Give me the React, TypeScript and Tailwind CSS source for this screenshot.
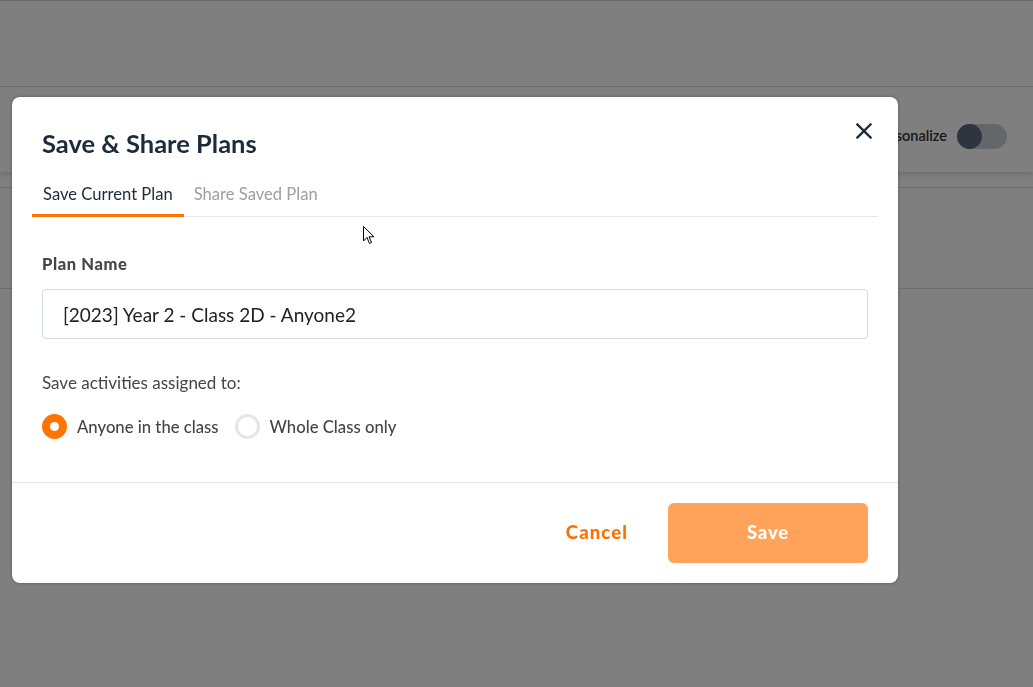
import { useState } from "react";

const FONT = "font-['Lato','Noto_Sans',sans-serif]";

function CloseIcon() {
  return (
    <svg width="16" height="16" viewBox="0 0 16 16" fill="none" stroke="#1c2b39" strokeWidth="2.3" strokeLinecap="square">
      <line x1="1.5" y1="1.5" x2="14.5" y2="14.5" />
      <line x1="14.5" y1="1.5" x2="1.5" y2="14.5" />
    </svg>
  );
}

function Radio({ checked, label, onClick }: { checked: boolean; label: string; onClick: () => void }) {
  return (
    <button onClick={onClick} className="flex items-center gap-[10px]">
      {checked ? (
        <span className="w-[25px] h-[25px] rounded-full bg-[#ff7300] flex items-center justify-center">
          <span className="w-[9px] h-[9px] rounded-full bg-white" />
        </span>
      ) : (
        <span className="w-[25px] h-[25px] rounded-full border-[3px] border-[#e6e6e6] bg-white" />
      )}
      <span className="text-[16.7px] leading-[20px] font-medium text-[#454545]">{label}</span>
    </button>
  );
}

export default function App() {
  const [tab, setTab] = useState<"save" | "share">("save");
  const [assign, setAssign] = useState<"anyone" | "whole">("anyone");
  const [name, setName] = useState("[2023] Year 2 - Class 2D - Anyone2");

  return (
    <div className={`relative min-h-screen bg-white overflow-hidden ${FONT}`}>
      {/* Page behind the dialog */}
      <div className="h-[87px] border-t border-b border-[#d6d6d6]" />
      <div className="mt-[13px] h-[72px] bg-white shadow-[0_3px_5px_rgba(0,0,0,0.12)] flex items-center justify-end pr-[26px] gap-[10px]">
        <span className="text-[14.5px] font-semibold text-[#333333]">Personalize</span>
        <span className="w-[50px] h-[25px] rounded-full bg-[#c8ced2] flex items-center">
          <span className="w-[25px] h-[25px] rounded-full bg-[#5c6a80]" />
        </span>
      </div>
      <div className="mt-[15px] h-[102px] border-t border-b border-[#dcdcdc]" />

      {/* Backdrop */}
      <div className="fixed inset-0 bg-black/50" />

      {/* Dialog */}
      <div className="absolute left-[12px] top-[97px] w-[886px] bg-white rounded-lg shadow-[0_0_3px_rgba(0,0,0,0.35)]">
        <div className="flex items-start justify-between pl-[30px] pr-[26px] pt-[32px]">
          <h2 className="text-[25.5px] leading-[28px] font-bold text-[#1c2b39]">Save &amp; Share Plans</h2>
          <button className="-mt-[6px]" aria-label="Close">
            <CloseIcon />
          </button>
        </div>

        <div className="mx-[20px] mt-[14px] flex border-b border-[#e8e8e8]">
          <button
            onClick={() => setTab("save")}
            className={`px-[11px] pt-[13px] pb-[10px] -mb-px border-b-[3px] text-[16.6px] leading-[20px] ${
              tab === "save" ? "border-[#ff7300] text-[#1c2b39]" : "border-transparent text-[#9aa0a6]"
            }`}
          >
            Save Current Plan
          </button>
          <button
            onClick={() => setTab("share")}
            className={`px-[10px] pt-[13px] pb-[10px] -mb-px border-b-[3px] text-[16.6px] leading-[20px] ${
              tab === "share" ? "border-[#ff7300] text-[#1c2b39]" : "border-transparent text-[#9aa0a6]"
            }`}
          >
            Share Saved Plan
          </button>
        </div>

        <div className="px-[30px]">
          <div className="mt-[37px] text-[16.5px] leading-[20px] font-black tracking-[0.6px] text-[#454545]">Plan Name</div>
          <input
            value={name}
            onChange={(e) => setName(e.target.value)}
            className="mt-[15px] w-full h-[50px] rounded border border-[#d5d9e0] px-[20px] text-[19px] text-[#222222] outline-none"
          />
          <div className="mt-[34px] text-[17px] leading-[20px] text-[#454545]">Save activities assigned to:</div>
          <div className="mt-[21px] flex items-center gap-[16px]">
            <Radio checked={assign === "anyone"} label="Anyone in the class" onClick={() => setAssign("anyone")} />
            <Radio checked={assign === "whole"} label="Whole Class only" onClick={() => setAssign("whole")} />
          </div>
        </div>

        <div className="mt-[43px] border-t border-[#e2e6ec] flex items-center justify-end gap-[40px] pt-[20px] pb-[20px] pr-[30px]">
          <button className="text-[18.5px] leading-[22px] -mt-[2px] font-black tracking-[1.1px] text-[#ff6f00]">Cancel</button>
          <button className="w-[200px] h-[60px] rounded-md bg-[#fea359] text-white text-[18.5px] font-black tracking-[0.8px]">Save</button>
        </div>
      </div>

      {/* Mouse pointer */}
      <svg className="absolute left-[363px] top-[226px]" width="12" height="19" viewBox="0 0 12 19">
        <path d="M0.5 0.5 L0.5 15 L4 11.5 L6.5 17.5 L8.5 16.5 L6 10.8 L11 10.8 Z" fill="#ffffff" stroke="#000000" strokeWidth="1" />
      </svg>
    </div>
  );
}
